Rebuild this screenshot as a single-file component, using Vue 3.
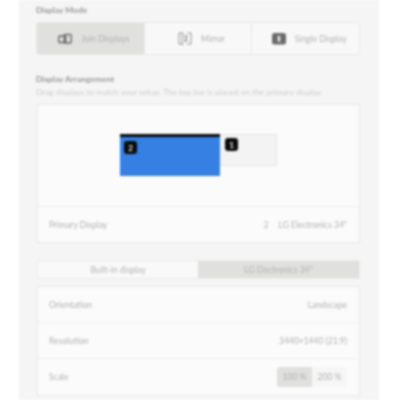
<script setup>
const modes = [
  { label: 'Join Displays', icon: 'join', active: true },
  { label: 'Mirror', icon: 'mirror', active: false },
  { label: 'Single Display', icon: 'single', active: false }
]
const rows = [
  { label: 'Orientation', value: 'Landscape' },
  { label: 'Resolution', value: '3440×1440 (21:9)' }
]
</script>

<template>
  <div class="page">
    <main class="panel">
      <h2 class="heading first">Display Mode</h2>
      <div class="modes">
        <button v-for="m in modes" :key="m.label" class="mode" :class="{ active: m.active }">
          <svg v-if="m.icon === 'join'" class="icon" width="14" height="12" viewBox="0 0 14 12" fill="none" stroke="#666" stroke-width="1.4">
            <rect x="0.8" y="3" width="7" height="6.5" rx="1" />
            <rect x="6.2" y="1.5" width="7" height="8.5" rx="1.2" />
          </svg>
          <svg v-else-if="m.icon === 'mirror'" class="icon" width="14" height="15" viewBox="0 0 14 15" fill="none" stroke="#999" stroke-width="1.1">
            <path d="M4.5 1.5 L1 2.5 V12.5 L4.5 13.5 V1.5" />
            <path d="M9.5 1.5 L13 2.5 V12.5 L9.5 13.5" />
            <path d="M7 4 L9 11 M9 4 L7 11" />
          </svg>
          <svg v-else class="icon" width="14" height="14" viewBox="0 0 14 14">
            <rect x="0" y="1" width="14" height="11.5" rx="2.5" fill="#6a6a6a" />
            <rect x="5.8" y="4" width="2.4" height="5.6" fill="#f2f2f2" />
          </svg>
          <span>{{ m.label }}</span>
        </button>
      </div>

      <h2 class="heading second">Display Arrangement</h2>
      <p class="hint">Drag displays to match your setup. The top bar is placed on the primary display.</p>
      <section class="card arrangement">
        <div class="canvas">
          <div class="screen primary"><b class="badge">2</b></div>
          <div class="screen secondary"><b class="badge">1</b></div>
        </div>
        <div class="row primary-row">
          <span>Primary Display</span>
          <span class="value"><i>2</i>LG Electronics 34"</span>
        </div>
      </section>

      <div class="tabs">
        <button class="tab first-tab">Built-in display</button>
        <button class="tab active">LG Electronics 34"</button>
      </div>

      <section class="card">
        <div v-for="r in rows" :key="r.label" class="row tall">
          <span>{{ r.label }}</span>
          <span>{{ r.value }}</span>
        </div>
        <div class="row tall">
          <span>Scale</span>
          <div class="scale">
            <button class="scale-btn active">100 %</button>
            <button class="scale-btn">200 %</button>
          </div>
        </div>
      </section>
    </main>
  </div>
</template>

<style>
html, body { margin: 0; background: #fff; }
</style>

<style scoped>
.page {
  width: 400px;
  height: 400px;
  overflow: hidden;
  background: #fff;
  font-family: Lato, "Open Sans", sans-serif;
  filter: blur(0.85px);
}
.panel {
  width: 360px;
  height: 400px;
  margin-left: 19px;
  padding: 0 19px 0 17px;
  box-sizing: border-box;
  background: #f5f5f5;
  color: #b2b2b2;
  font-size: 8.5px;
}
.heading {
  margin: 0;
  font-size: 8.4px;
  line-height: 10px;
  font-weight: 700;
  color: #979797;
}
.first { padding-top: 5px; }
.modes {
  display: flex;
  height: 33px;
  margin-top: 7px;
  box-sizing: border-box;
  border: 1px solid #e9e9e9;
  border-radius: 3px;
  background: #f8f8f8;
  overflow: hidden;
}
button {
  font: inherit;
  color: inherit;
  border: 0;
  padding: 0;
  background: none;
}
.mode {
  flex: 1;
  display: flex;
  align-items: center;
  justify-content: center;
  gap: 9px;
  padding-left: 7px;
  border-left: 1px solid #e9e9e9;
}
.mode:first-child { border-left: 0; }
.mode.active { background: #e0e0de; }
.second { margin-top: 19px; }
.hint {
  margin: 3px 0 0;
  font-size: 8.3px;
  line-height: 10px;
  color: #cdcdcd;
  white-space: nowrap;
}
.card {
  margin-left: 1px;
  width: 323px;
  box-sizing: border-box;
  border: 1px solid #e8e8e8;
  background: #fbfbfc;
}
.arrangement { margin-top: 7px; height: 139px; }
.canvas {
  display: flex;
  justify-content: center;
  align-items: flex-start;
  height: 102px;
  padding-top: 29px;
  box-sizing: border-box;
  border-bottom: 1px solid #efefef;
}
.screen { box-sizing: border-box; }
.primary {
  width: 100px;
  height: 42px;
  background: #3580e2;
  border-top: 3px solid #0a0a0a;
  padding: 4px 0 0 4px;
}
.secondary {
  width: 57px;
  height: 32px;
  background: #f3f3f3;
  border: 1px solid #e6e6e6;
  border-left: 0;
  padding: 3px 0 0 5px;
}
.badge {
  display: flex;
  align-items: center;
  justify-content: center;
  width: 13px;
  height: 13px;
  border-radius: 3px;
  background: #0a0a0a;
  color: #eee;
  font-size: 8px;
}
.row {
  display: flex;
  justify-content: space-between;
  align-items: center;
  padding: 0 12px 0 11px;
  color: #b2b2b2;
}
.primary-row { height: 36px; }
.value i {
  font-style: normal;
  margin-right: 10px;
}
.tabs {
  display: flex;
  width: 323px;
  height: 19px;
  margin: 17px 0 0 1px;
  box-sizing: border-box;
  border: 1px solid #ebebeb;
  border-radius: 2px;
  background: #f9f9f9;
  overflow: hidden;
}
.tab { flex: 1; }
.first-tab { flex: 0 0 160px; }
.tab.active { background: #e0e0de; }
.tabs + .card { margin-top: 7px; }
.tall {
  height: 36px;
  box-sizing: border-box;
  border-bottom: 1px solid #f0f0f0;
}
.tall:last-child { border-bottom: 0; }
.scale {
  display: flex;
  width: 70px;
  height: 20px;
  border-radius: 3px;
  background: #f6f6f6;
  overflow: hidden;
}
.scale-btn { flex: 1; }
.scale-btn.active { background: #e0e0de; }
</style>
